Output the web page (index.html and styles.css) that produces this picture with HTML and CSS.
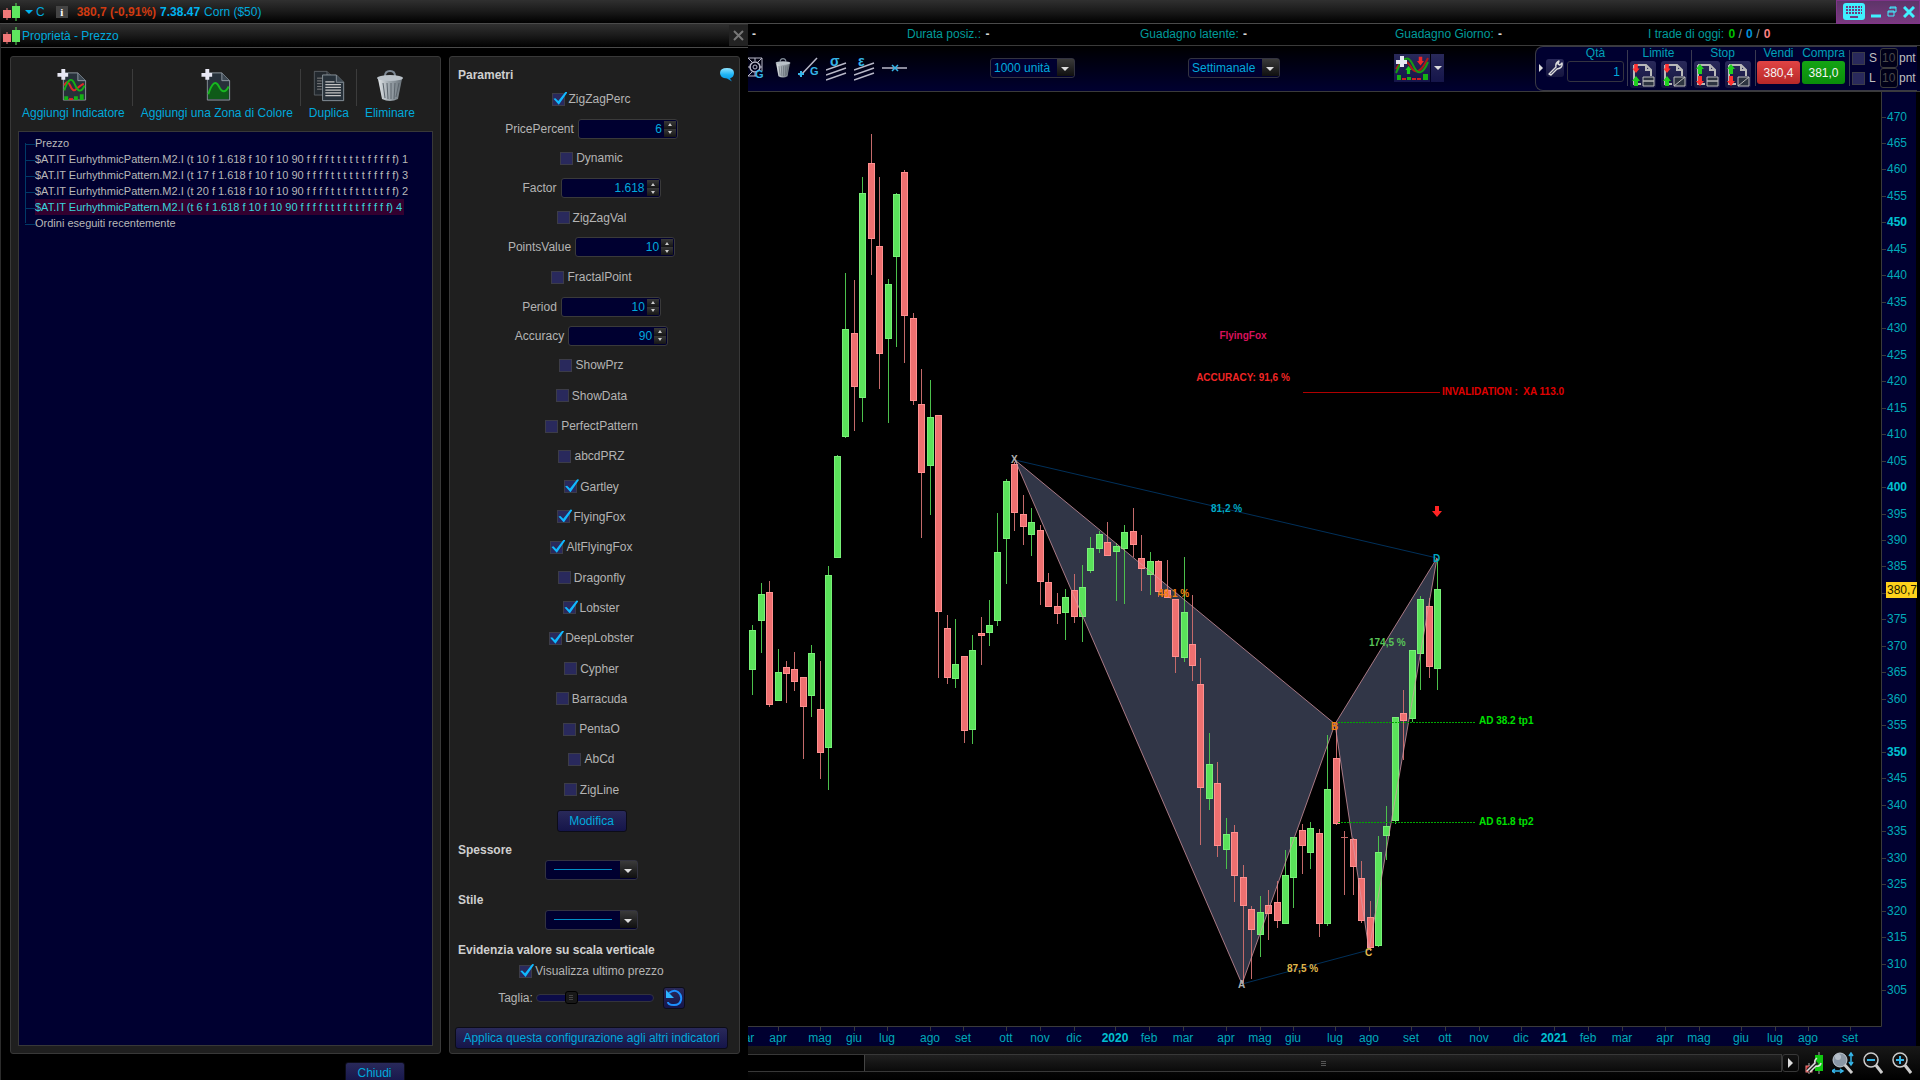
FILE: index.html
```html
<!DOCTYPE html>
<html lang="it">
<head>
    <meta charset="UTF-8">
    <meta name="viewport" content="width=device-width, initial-scale=1.0">
    <title>Corn ($50)</title>
    <link rel="stylesheet" href="styles.css">
</head>
<body>
    <!-- shared icon shapes -->
    <svg class="defs" width="0" height="0" aria-hidden="true">
        <defs>
            <linearGradient id="steel" x1="0" x2="1" y1="0" y2="0">
                <stop offset="0" stop-color="#dfe3e6"/>
                <stop offset="0.5" stop-color="#9aa3aa"/>
                <stop offset="1" stop-color="#6b747b"/>
            </linearGradient>
            <linearGradient id="bubble" x1="0" x2="0" y1="0" y2="1">
                <stop offset="0" stop-color="#8fe3ff"/>
                <stop offset="0.5" stop-color="#1cb4f5"/>
                <stop offset="1" stop-color="#0690dd"/>
            </linearGradient>
            <symbol id="candles" viewBox="0 0 17 18">
                <path d="M4 5v12" stroke="#f07878"/>
                <rect x="0" y="7" width="8" height="8" fill="#f07878"/>
                <path d="M13 0v18" stroke="#5fe65f"/>
                <rect x="9" y="3" width="8" height="12" fill="#5fe65f"/>
            </symbol>
            <symbol id="trash" viewBox="0 0 28 32">
                <path d="M9 6q0-5 5-5t5 5" fill="none" stroke="#7d8894" stroke-width="2"/>
                <path d="M2 9h24l-4 20q-8 4-16 0z" fill="url(#steel)"/>
                <ellipse cx="14" cy="8" rx="13" ry="3" fill="#b9c1c8"/>
                <path d="M7 13l2 15M11 13l1 16M15 13v16M19 13l-1 16M23 13l-3 14" stroke="#5c656d" stroke-width="1"/>
            </symbol>
            <symbol id="doc" viewBox="0 0 26 30">
                <path d="M1 1h15l8 8v20H1z" fill="#27313a" stroke="#8d979f"/>
                <path d="M16 1v8h8" fill="#3d4852" stroke="#8d979f"/>
            </symbol>
            <symbol id="order" viewBox="0 0 24 24">
                <path d="M3 2h12l5 5v6M3 2v19h7M15 2v5h5" fill="none" stroke="#b9b9b9" stroke-width="2"/>
            </symbol>
            <symbol id="up" viewBox="0 0 8 10"><path d="M4 0l4 5H6v5H2V5H0z"/></symbol>
            <symbol id="down" viewBox="0 0 8 10"><path d="M4 10l4-5H6V0H2v5H0z"/></symbol>
            <symbol id="wrench" viewBox="0 0 16 16">
                <path d="M2 14l7-7q-1-4 3-6l-1 3 2 1 2-2q1 5-5 6l-6 6z" fill="none" stroke="#dcdcdc" stroke-width="1.4" stroke-linejoin="round"/>
            </symbol>
        </defs>
    </svg>

    <header class="titlebar">
        <svg class="candle-icon"><use href="#candles"/></svg>
        <button class="symbol-menu" aria-label="Menu"></button>
        <span class="symbol">C</span>
        <span class="info">i</span>
        <span class="last">380,7 (-0,91%)</span>
        <span class="time">7.38.47</span>
        <span>Corn ($50)</span>
        <div class="window-buttons">
            <button aria-label="Tastiera">
                <svg width="22" height="17" viewBox="0 0 22 17">
                    <rect width="22" height="17" rx="3" fill="#40f0ff"/>
                    <path d="M3 4h16M3 7h16M3 10h16" stroke="#703a80" stroke-width="2" stroke-dasharray="2 1"/>
                    <path d="M7 14h8" stroke="#703a80" stroke-width="2"/>
                </svg>
            </button>
            <button aria-label="Riduci">
                <svg width="10" height="14" viewBox="0 0 10 14"><path d="M0 11h10" stroke="#40f0ff" stroke-width="3"/></svg>
            </button>
            <button aria-label="Ripristina">
                <svg width="10" height="12" viewBox="0 0 10 12"><path d="M3 3V1h6v5H7M3 2h6M1 5h6v5H1zM1 6h6" fill="none" stroke="#40f0ff"/></svg>
            </button>
            <button aria-label="Chiudi finestra">
                <svg width="12" height="12" viewBox="0 0 12 12"><path d="M1 1l10 10M11 1L1 11" stroke="#40f0ff" stroke-width="3"/></svg>
            </button>
        </div>
    </header>

    <main class="workspace">
        <section class="dialog">
            <div class="dialog-title">
                <svg class="candle-icon"><use href="#candles"/></svg>
                <h1>Proprietà - Prezzo</h1>
                <button class="dialog-close" aria-label="Chiudi dialogo">
                    <svg width="11" height="11" viewBox="0 0 11 11"><path d="M1 1l9 9M10 1l-9 9" stroke="#777" stroke-width="2"/></svg>
                </button>
            </div>

            <div class="dialog-body">
                <div class="panel list-panel">
                    <div class="actions">
                        <button>
                            <svg width="32" height="34" viewBox="0 0 32 34">
                                <use href="#doc" x="5" y="3" width="26" height="30"/>
                                <path d="M7 17q3-7 6 0t6 4 8-6" fill="none" stroke="#e02828" stroke-width="2"/>
                                <path d="M7 22q6-18 11-6t10 1" fill="none" stroke="#15b015" stroke-width="2"/>
                                <path d="M7 32v-4h4v4M17 32v-4h4v4M23 32v-6h4v6" fill="#15b015"/>
                                <path d="M12 32v-2h4v2" fill="#e02828"/>
                                <path d="M6 0v11M0 6h11" stroke="#e8e8f4" stroke-width="4"/>
                            </svg>
                            Aggiungi Indicatore
                        </button>
                        <button>
                            <svg width="32" height="34" viewBox="0 0 32 34">
                                <use href="#doc" x="5" y="3" width="26" height="30"/>
                                <path d="M7 26q6-18 11-8t10 0v13H7z" fill="#0f5a18"/>
                                <path d="M7 26q6-18 11-8t10 0" fill="none" stroke="#17b81f" stroke-width="2"/>
                                <path d="M6 0v11M0 6h11" stroke="#e8e8f4" stroke-width="4"/>
                            </svg>
                            Aggiungi una Zona di Colore
                        </button>
                        <button>
                            <svg width="34" height="36" viewBox="0 0 34 36">
                                <use href="#doc" x="0" y="0" width="24" height="31" opacity="0.6"/>
                                <path d="M4 10h6M4 13h5M4 16h5M4 19h5M4 22h5" stroke="#888"/>
                                <use href="#doc" x="9" y="5" width="26" height="31"/>
                                <path d="M13 14h10M13 17h17M13 20h17M13 23h17M13 26h17M13 29h17" stroke="#c4c4c4" stroke-width="1.5"/>
                            </svg>
                            Duplica
                        </button>
                        <button>
                            <svg width="28" height="32"><use href="#trash"/></svg>
                            Eliminare
                        </button>
                    </div>
                    <ul class="tree">
                        <li>Prezzo</li>
                        <li>$AT.IT EurhythmicPattern.M2.I (t 10 f 1.618 f 10 f 10 90 f f f f t t t t t t f f f f f) 1</li>
                        <li>$AT.IT EurhythmicPattern.M2.I (t 17 f 1.618 f 10 f 10 90 f f f f t t t t t t f f f f f) 3</li>
                        <li>$AT.IT EurhythmicPattern.M2.I (t 20 f 1.618 f 10 f 10 90 f f f f t t t f t t t t t f f) 2</li>
                        <li><span class="selected">$AT.IT EurhythmicPattern.M2.I (t 6 f 1.618 f 10 f 10 90 f f f f t t t f t t f f f f f) 4</span></li>
                        <li>Ordini eseguiti recentemente</li>
                    </ul>
                </div>

                <form class="panel params">
                    <div class="params-head">
                        <h2>Parametri</h2>
                        <svg width="14" height="14" viewBox="0 0 14 14"><path d="M7 0q7 0 7 5 0 4-4 5.500l2 3-5-3Q0 10 0 5q0-5 7-5z" fill="url(#bubble)"/></svg>
                    </div>
                    <label class="check"><input type="checkbox" checked>ZigZagPerc</label>
                    <div class="number"><label for="pricePercent">PricePercent</label><span class="spin"><input id="pricePercent" type="text" value="6"><button type="button" aria-label="Aumenta"></button><button type="button" aria-label="Diminuisci"></button></span></div>
                    <label class="check"><input type="checkbox">Dynamic</label>
                    <div class="number"><label for="factor">Factor</label><span class="spin"><input id="factor" type="text" value="1.618"><button type="button" aria-label="Aumenta"></button><button type="button" aria-label="Diminuisci"></button></span></div>
                    <label class="check"><input type="checkbox">ZigZagVal</label>
                    <div class="number"><label for="pointsValue">PointsValue</label><span class="spin"><input id="pointsValue" type="text" value="10"><button type="button" aria-label="Aumenta"></button><button type="button" aria-label="Diminuisci"></button></span></div>
                    <label class="check"><input type="checkbox">FractalPoint</label>
                    <div class="number"><label for="period">Period</label><span class="spin"><input id="period" type="text" value="10"><button type="button" aria-label="Aumenta"></button><button type="button" aria-label="Diminuisci"></button></span></div>
                    <div class="number"><label for="accuracy">Accuracy</label><span class="spin"><input id="accuracy" type="text" value="90"><button type="button" aria-label="Aumenta"></button><button type="button" aria-label="Diminuisci"></button></span></div>
                    <label class="check"><input type="checkbox">ShowPrz</label>
                    <label class="check"><input type="checkbox">ShowData</label>
                    <label class="check"><input type="checkbox">PerfectPattern</label>
                    <label class="check"><input type="checkbox">abcdPRZ</label>
                    <label class="check"><input type="checkbox" checked>Gartley</label>
                    <label class="check"><input type="checkbox" checked>FlyingFox</label>
                    <label class="check"><input type="checkbox" checked>AltFlyingFox</label>
                    <label class="check"><input type="checkbox">Dragonfly</label>
                    <label class="check"><input type="checkbox" checked>Lobster</label>
                    <label class="check"><input type="checkbox" checked>DeepLobster</label>
                    <label class="check"><input type="checkbox">Cypher</label>
                    <label class="check"><input type="checkbox">Barracuda</label>
                    <label class="check"><input type="checkbox">PentaO</label>
                    <label class="check"><input type="checkbox">AbCd</label>
                    <label class="check"><input type="checkbox">ZigLine</label>
                    <button type="button" class="btn modify">Modifica</button>

                    <label class="section-title" for="width">Spessore</label>
                    <span class="select line"><select id="width"><option label=" "></option></select></span>
                    <label class="section-title" for="style">Stile</label>
                    <span class="select line"><select id="style"><option label=" "></option></select></span>

                    <h2 class="section-title">Evidenzia valore su scala verticale</h2>
                    <label class="check last-price"><input type="checkbox" checked>Visualizza ultimo prezzo</label>
                    <div class="size">
                        <label for="size">Taglia:</label>
                        <input id="size" type="range" min="0" max="100" value="27">
                        <button type="button" class="btn reset" aria-label="Ripristina taglia">
                            <svg width="18" height="18" viewBox="0 0 18 18"><path d="M4 4q5-4 9-1t3 8-7 5-6-3" fill="none" stroke="#1e90ff" stroke-width="2"/><path d="M1 1v8h8z" fill="#2cb5ff"/></svg>
                        </button>
                    </div>
                    <button type="button" class="btn apply">Applica questa configurazione agli altri indicatori</button>
                </form>
            </div>

            <div class="dialog-footer"><button class="btn close">Chiudi</button></div>
        </section>

        <section class="chart-window">
            <div class="stats">
                <span><b>-</b></span>
                <span>Durata posiz.: <b>-</b></span>
                <span>Guadagno latente: <b>-</b></span>
                <span>Guadagno Giorno: <b>-</b></span>
                <span>I trade di oggi: <b class="win">0</b> <i>/</i> <b class="even">0</b> <i>/</i> <b class="loss">0</b></span>
            </div>

            <div class="toolbar">
                <div class="tools">
                    <button aria-label="Griglia">
                        <svg width="17" height="26" viewBox="0 0 17 26">
                            <path d="M0 3h14v13M0 21h8M0 3l4 4M14 3l-4 4M0 21l4-4M7 3v3M7 21v-3M14 12h-3M0 12h3" fill="none" stroke="#b8b8c8"/>
                            <circle cx="7" cy="12" r="5" fill="none" stroke="#b8b8c8" stroke-width="1.5"/>
                            <circle cx="7" cy="12" r="2" fill="none" stroke="#b8b8c8"/>
                            <text x="7" y="23" class="tool-letter">G</text>
                        </svg>
                    </button>
                    <button aria-label="Cancella"><svg width="16" height="20" viewBox="0 0 28 32" preserveAspectRatio="none"><use href="#trash"/></svg></button>
                    <button aria-label="Linea">
                        <svg width="21" height="22" viewBox="0 0 21 22"><path d="M2 19L19 1" stroke="#b8b8c8" stroke-width="1.5"/><path d="M0 17h6M3 14v6" stroke="#35b5e8" stroke-width="2"/><text x="12" y="18" class="tool-letter">G</text></svg>
                    </button>
                    <button aria-label="Canale sigma">
                        <svg width="21" height="30" viewBox="0 0 21 30"><path d="M0 19l20-7M0 24l20-7M0 29l20-7" transform="translate(0 -2)" stroke="#b8b8c8" stroke-width="1.5"/><text x="4" y="13" class="tool-greek">σ</text></svg>
                    </button>
                    <button aria-label="Canale epsilon">
                        <svg width="21" height="30" viewBox="0 0 21 30"><path d="M0 19l20-7M0 24l20-7M0 29l20-7" transform="translate(0 -2)" stroke="#b8b8c8" stroke-width="1.5"/><text x="4" y="13" class="tool-greek">ε</text></svg>
                    </button>
                    <button aria-label="Linea orizzontale">
                        <svg width="25" height="10" viewBox="0 0 25 10"><path d="M0 5h25" stroke="#b8b8c8" stroke-width="1.5"/><path d="M10 2l6 6M16 2l-6 6" stroke="#35b5e8" stroke-width="1.5"/></svg>
                    </button>
                </div>
                <div><span class="select units"><select aria-label="Unità"><option>1000 unità</option></select></span></div>
                <div><span class="select period"><select aria-label="Periodo"><option>Settimanale</option></select></span></div>
                <div class="indicator">
                    <button class="add-indicator" aria-label="Aggiungi indicatore al grafico">
                        <svg width="34" height="26" viewBox="0 0 34 26">
                            <path d="M1 14q8-14 15-2t17-9" fill="none" stroke="#b01818" stroke-width="2"/>
                            <path d="M1 18q10-24 17-8t15-3" fill="none" stroke="#159a15" stroke-width="2"/>
                            <path d="M2 25v-5h4v5M12 25v-3h4v3M28 25v-6h5v6" fill="#15b015"/>
                            <path d="M7 25v-2h4v2M17 25v-2h4v2M22 25v-2h4v2" fill="#d01f1f"/>
                            <use href="#down" x="22" y="1" width="7" height="10" fill="#f02828"/>
                            <use href="#up" x="10" y="11" width="7" height="8" fill="#18d018"/>
                            <path d="M7 1v11M1 7h11" stroke="#e8e8f4" stroke-width="4"/>
                        </svg>
                    </button>
                    <button class="indicator-menu" aria-label="Elenco indicatori"></button>
                </div>
                <div class="orders">
                    <button class="collapse" aria-label="Comprimi"></button>
                    <button class="tile" aria-label="Impostazioni ordini"><svg width="16" height="16"><use href="#wrench"/></svg></button>
                    <div class="group">
                        <label for="qty">Qtà</label>
                        <input id="qty" class="qty" type="text" value="1">
                    </div>
                    <div class="group ruled">
                        <span>Limite</span>
                        <div class="pair">
                            <button class="tile" aria-label="Limite 1"><svg width="24" height="24" viewBox="0 0 24 24"><use href="#order"/><use href="#down" x="1" y="1" width="8" height="9" fill="#ff3030"/><use href="#up" x="1" y="13" width="8" height="10" fill="#20d020"/><path d="M12 14h11v4H12zM12 18h11v5H12z" fill="#2c3340" stroke="#b9b9b9"/></svg></button>
                            <button class="tile" aria-label="Limite 2"><svg width="24" height="24" viewBox="0 0 24 24"><use href="#order"/><use href="#down" x="1" y="1" width="8" height="9" fill="#ff3030"/><use href="#up" x="1" y="13" width="8" height="10" fill="#20d020"/><path d="M12 14h11v9H12zM12 23l11-9" fill="#2c3340" stroke="#b9b9b9"/></svg></button>
                        </div>
                    </div>
                    <div class="group ruled">
                        <span>Stop</span>
                        <div class="pair">
                            <button class="tile" aria-label="Stop 1"><svg width="24" height="24" viewBox="0 0 24 24"><use href="#order"/><use href="#up" x="1" y="1" width="8" height="10" fill="#20d020"/><use href="#down" x="1" y="13" width="8" height="10" fill="#ff3030"/><path d="M12 14h11v4H12zM12 18h11v5H12z" fill="#2c3340" stroke="#b9b9b9"/></svg></button>
                            <button class="tile" aria-label="Stop 2"><svg width="24" height="24" viewBox="0 0 24 24"><use href="#order"/><use href="#up" x="1" y="1" width="8" height="10" fill="#20d020"/><use href="#down" x="1" y="13" width="8" height="10" fill="#ff3030"/><path d="M12 14h11v9H12zM12 23l11-9" fill="#2c3340" stroke="#b9b9b9"/></svg></button>
                        </div>
                    </div>
                    <div class="group ruled trade">
                        <span>Vendi</span>
                        <button class="sell">380,4</button>
                    </div>
                    <div class="group trade">
                        <span>Compra</span>
                        <button class="buy">381,0</button>
                    </div>
                    <div class="group ruled stops">
                        <div><label><input type="checkbox">S</label><input type="text" value="10" aria-label="Stop punti">pnt</div>
                        <div><label><input type="checkbox">L</label><input type="text" value="10" aria-label="Limite punti">pnt</div>
                    </div>
                </div>
            </div>

            <svg class="chart" viewBox="748 92 1172 954" preserveAspectRatio="none">
                <rect class="axis-bg" x="1882" y="92" width="34" height="954"/>
                <rect class="axis-bg" x="748" y="1027" width="1168" height="19"/>
                <path class="axis-line" d="M748 1026.500H1881.500V92"/>
                <path class="pattern-fill" d="M1015 460L1242 984L1335 724zM1335 724L1369 950L1437 558z"/>
                <path class="link" d="M1015 460L1437 558M1242 984L1369 950"/>
                <g id="candleLayer"></g>
                <path class="pattern-edge" d="M1015 460L1242 984L1335 724zM1335 724L1369 950L1437 558z"/>
                <path class="invalid" d="M1303 392.500H1440"/>
                <path class="target" d="M1338 722.500H1476M1338 822.500H1476"/>
                <path d="M1435 506h4v5h3l-5 6-5-6h3z" fill="#ff2424"/>
                <g class="notes">
                    <text x="1243" y="339" fill="#d8125c" text-anchor="middle">FlyingFox</text>
                    <text x="1243" y="381" fill="#f02626" text-anchor="middle">ACCURACY: 91,6 %</text>
                    <text x="1442" y="395" fill="#e00000" xml:space="preserve">INVALIDATION :  XA 113.0</text>
                    <text x="1211" y="512" fill="#00a9c4">81,2 %</text>
                    <text x="1158" y="597" fill="#f08010">48,1 %</text>
                    <text x="1369" y="646" fill="#58c458">174,5 %</text>
                    <text x="1287" y="972" fill="#e0b84c">87,5 %</text>
                    <text x="1479" y="724" fill="#00e000">AD 38.2 tp1</text>
                    <text x="1479" y="825" fill="#00e000">AD 61.8 tp2</text>
                    <text x="1011" y="463" fill="#b0b0b0">X</text>
                    <text x="1238" y="988" fill="#b0b0b0">A</text>
                    <text x="1331" y="730" fill="#f08010">B</text>
                    <text x="1365" y="956" fill="#e0b84c">C</text>
                    <text x="1433" y="562" fill="#00a9c4">D</text>
                </g>
                <g id="priceAxis" class="axis"></g>
                <g id="timeAxis" class="axis"></g>
                <rect x="1886" y="582" width="31" height="16" fill="#ffd21c"/>
                <text class="price-tag" x="1887" y="594">380,7</text>
            </svg>

            <footer class="bottom-bar">
                <div class="scrollbar"><div class="thumb"></div></div>
                <button class="scroll-right" aria-label="Avanti"></button>
                <button aria-label="Opzioni grafico">
                    <svg width="18" height="22" viewBox="0 0 18 22"><path d="M14 0v22M4 11v11" stroke="#aaa"/><rect x="10" y="3" width="8" height="16" fill="#10c810"/><rect x="1" y="14" width="6" height="6" fill="#c82020" stroke="#e88"/><path d="M3 19l9-9" stroke="#222" stroke-width="5"/><path d="M2 19l8-8q-1-3 2-5M5 20l6-6q4 1 5-3" fill="none" stroke="#e0e0e0" stroke-width="1.5"/></svg>
                </button>
                <button aria-label="Zoom adatta">
                    <svg width="22" height="22" viewBox="0 0 22 22"><path d="M12 12l8 9" stroke="#ccc" stroke-width="3"/><circle cx="8" cy="8" r="7" fill="#8b97a5" stroke="#c5ccd4"/><circle cx="6" cy="5" r="3" fill="#b5bec8"/><path d="M19 2v10M17 4l2-3 2 3M17 10l2 3 2-3M1 19h9M3 17l-3 2 3 2M8 17l3 2-3 2" fill="none" stroke="#35b5e8" stroke-width="1.500"/></svg>
                </button>
                <button aria-label="Zoom indietro">
                    <svg width="20" height="22" viewBox="0 0 20 22"><path d="M12 12l7 9" stroke="#ccc" stroke-width="3"/><circle cx="8" cy="8" r="7" fill="#111" stroke="#ccc" stroke-width="1.500"/><path d="M4 8h8" stroke="#35b5e8" stroke-width="2"/></svg>
                </button>
                <button aria-label="Zoom avanti">
                    <svg width="20" height="22" viewBox="0 0 20 22"><path d="M12 12l7 9" stroke="#ccc" stroke-width="3"/><circle cx="8" cy="8" r="7" fill="#111" stroke="#ccc" stroke-width="1.500"/><path d="M4 8h8M8 4v8" stroke="#35b5e8" stroke-width="2"/></svg>
                </button>
            </footer>
        </section>
    </main>

    <script src="chart.js"></script>
</body>
</html>
```
FILE: styles.css
```css
* {
    box-sizing: border-box;
}
body {
    margin: 0;
    height: 100vh;
    display: flex;
    flex-direction: column;
    overflow: hidden;
    background: #000;
    color: #00a9dc;
    font-family: "Liberation Sans", Arial, sans-serif;
    font-size: 12px;
}
button, input, select {
    font: inherit;
    color: inherit;
    margin: 0;
}
button {
    padding: 0;
    border: 0;
    background: none;
    cursor: pointer;
}
svg {
    display: block;
}
h1, h2 {
    margin: 0;
    font-size: 12px;
    font-weight: normal;
}
.defs {
    position: absolute;
}

/* title bars */
.titlebar, .dialog-title {
    display: flex;
    align-items: center;
    height: 24px;
    padding-left: 3px;
    border-bottom: 1px solid #4a4a4a;
    background: linear-gradient(#303030, #1a1a1a 50%, #000);
}
.titlebar {
    flex: none;
}
.candle-icon {
    width: 17px;
    height: 18px;
    margin-right: 2px;
}
.symbol-menu {
    margin: 0 3px;
    border: 4px solid transparent;
    border-top-color: #00b4f0;
    border-bottom: 0;
}
.info {
    width: 12px;
    margin: 0 9px 0 11px;
    background: #444;
    color: #fff;
    font: bold 11px "Liberation Serif", serif;
    line-height: 12px;
    text-align: center;
}
.last {
    margin-right: 4px;
    color: #d03a10;
    font-weight: bold;
}
.time {
    margin-right: 4px;
    color: #00b4f0;
    font-weight: bold;
}
.window-buttons {
    display: flex;
    align-items: center;
    gap: 6px;
    height: 24px;
    margin-left: auto;
    padding: 0 4px 0 6px;
    border: 1px solid #80338a;
    background: linear-gradient(#5d3468, #7a3a80);
}
.dialog-close {
    margin-left: auto;
    padding: 5px 4px;
    background: #222;
}

.workspace {
    display: flex;
    flex: 1;
    min-height: 0;
}

/* properties dialog */
.dialog {
    display: flex;
    flex-direction: column;
    flex: none;
    width: 748px;
    border-left: 1px solid #2c2c2c;
}
.dialog-title {
    padding-left: 2px;
}
.dialog-body {
    display: flex;
    flex: 1;
    gap: 8px;
    min-height: 0;
    padding: 8px 8px 0 9px;
}
.panel {
    display: flex;
    flex-direction: column;
    border: 1px solid #383838;
    border-radius: 3px;
    background: #1f1f1f;
}
.list-panel {
    flex: 1;
    min-width: 0;
    padding: 12px 7px 7px;
}
.actions {
    display: flex;
    margin-bottom: 11px;
    white-space: nowrap;
}
.actions button {
    display: flex;
    flex-direction: column;
    align-items: center;
    justify-content: flex-end;
    gap: 4px;
    height: 51px;
    padding: 0 8px;
    background: linear-gradient(#3c3c3c, #3c3c3c) right top / 1px 37px no-repeat;
}
.actions button:first-child {
    padding-left: 4px;
}
.actions button:last-child {
    background: none;
}
.tree {
    flex: 1;
    margin: 0;
    padding: 3px 0 0 16px;
    border: 1px solid #383838;
    background: #000030;
    list-style: none;
    font-size: 11px;
    line-height: 16px;
    color: #b8b8b8;
    white-space: nowrap;
}
.tree li {
    display: flex;
    margin-left: -10px;
    background: linear-gradient(#003a68, #003a68) left top / 1px 100% no-repeat;
}
.tree li::before {
    content: "";
    width: 10px;
    height: 9px;
    border-bottom: 1px solid #003a68;
}
.tree li:first-child {
    background-position: left bottom;
    background-size: 1px 8px;
}
.tree li:last-child {
    background-size: 1px 8px;
}
.selected {
    padding-right: 2px;
    background: #33002f;
    color: #38d4dc;
}

.params {
    flex: none;
    width: 291px;
    padding: 8px 11px 4px 5px;
    align-items: center;
    color: #b4b4b4;
}
.params-head {
    display: flex;
    align-items: center;
    justify-content: space-between;
    align-self: stretch;
    height: 20px;
    margin: 0 -6px -1px 0;
}
.params h2, .section-title {
    padding-left: 3px;
    font-weight: bold;
    color: #cfcfcf;
}
.check {
    display: flex;
    flex: 1;
    align-items: center;
    gap: 3px;
}
input[type="checkbox"] {
    appearance: none;
    width: 13px;
    height: 13px;
    border: 1px solid #3c3c48;
    background: #29295c;
}
input[type="checkbox"]:checked::before {
    content: "";
    display: block;
    width: 14px;
    height: 13px;
    margin-top: -2px;
    background: #10b8ff;
    clip-path: polygon(0 55%, 14% 50%, 34% 72%, 86% 0, 100% 4%, 38% 100%);
}
.number {
    display: flex;
    align-items: center;
    gap: 4px;
    height: 29px;
}
.spin {
    display: grid;
    grid-template-columns: 1fr 12px;
    grid-template-rows: 8px 8px;
    width: 100px;
    padding: 1px;
    border: 1px solid #3a3a3a;
    border-radius: 3px;
    background: #000030;
    color: #00a9dc;
}
.spin input {
    grid-row: 1 / 3;
    min-width: 0;
    padding: 0 2px 0 0;
    border: 0;
    background: none;
    text-align: right;
}
.spin button {
    display: grid;
    place-items: center;
    background: linear-gradient(#383838, #161616);
}
.spin button::before {
    content: "";
    border: 2px solid transparent;
    border-bottom: 3px solid #ccc;
    border-top: 0;
}
.spin button:last-child::before {
    border-top: 3px solid #ccc;
    border-bottom: 0;
}
.btn {
    border: 1px solid #0c0c18;
    border-radius: 3px;
    background: linear-gradient(#29295a, #15154a);
    color: #00a9dc;
    height: 22px;
}
.modify {
    width: 70px;
    margin: 5px 0 9px;
}
.section-title {
    align-self: flex-start;
    height: 18px;
    line-height: 18px;
}
.select {
    display: flex;
    position: relative;
    height: 20px;
    border: 1px solid #333340;
    border-radius: 3px;
    background: #000030;
}
.select::after {
    content: "";
    position: absolute;
    right: 5px;
    top: 8px;
    border: 4px solid transparent;
    border-top: 4px solid #ddd;
    border-bottom: 0;
    pointer-events: none;
}
.select select {
    appearance: none;
    flex: 1;
    padding: 0 20px 0 3px;
    border: 0;
    background: linear-gradient(#3a3a3a, #101010) right center / 17px 17px no-repeat;
    color: #00a9dc;
}
.line {
    width: 93px;
    margin: 1px 0 11px;
}
.line select {
    background: linear-gradient(#3a3a3a, #101010) right center / 17px 17px no-repeat, linear-gradient(#0090c8, #0090c8) 8px center / 58px 1px no-repeat;
}
.params .last-price {
    flex: none;
    height: 25px;
}
.size {
    display: flex;
    align-items: center;
    gap: 3px;
    height: 28px;
}
.size input {
    appearance: none;
    width: 118px;
    height: 8px;
    border: 1px solid #33333c;
    border-radius: 4px;
    background: #0c0c48;
}
.size input::-webkit-slider-thumb {
    appearance: none;
    width: 13px;
    height: 13px;
    border: 1px solid #000;
    border-radius: 3px;
    background: repeating-linear-gradient(#444 0 1px, transparent 1px 2px) center / 4px 5px no-repeat #181818;
}
.reset {
    display: grid;
    place-items: center;
    width: 22px;
    margin-left: 6px;
}
.apply {
    align-self: stretch;
    margin-top: 15px;
}
.dialog-footer {
    display: flex;
    justify-content: center;
    height: 26px;
    padding: 8px 0 0;
    overflow: hidden;
}
.close {
    width: 60px;
    flex: none;
}

/* chart window */
.chart-window {
    display: flex;
    flex-direction: column;
    flex: 1;
    min-width: 0;
}
.stats {
    display: grid;
    grid-template-columns: 159fr 233fr 255fr 253fr 272fr;
    align-items: center;
    height: 22px;
    padding-bottom: 2px;
    border-bottom: 1px solid #3a3a3a;
    color: #009b9b;
    white-space: nowrap;
}
.stats span:first-child {
    padding-left: 3px;
}
.stats b {
    margin-left: 1px;
    color: #d8d8d8;
}
.stats i {
    color: #999;
    font-style: normal;
}
.stats .win {
    color: #00c000;
}
.stats .even {
    color: #0090d8;
}
.stats .loss {
    color: #ff8080;
}
.toolbar {
    display: grid;
    grid-template-columns: 242fr 198fr 206fr 141fr 382px 3px;
    align-items: center;
    height: 46px;
    border-bottom: 1px solid #3a3a3a;
    background: linear-gradient(#000, #000030);
}
.toolbar > div {
    padding-bottom: 2px;
}
.tools {
    display: flex;
    align-items: center;
    gap: 7px;
}
.tools button:first-child {
    margin-right: 3px;
}
.tool-letter {
    font-size: 11px;
    font-weight: bold;
    fill: #35b5e8;
}
.tool-greek {
    font-size: 14px;
    font-weight: bold;
    fill: #35b5e8;
}
.units {
    width: 85px;
}
.period {
    width: 92px;
}
.indicator {
    display: flex;
    gap: 1px;
}
.add-indicator, .indicator-menu {
    display: grid;
    place-items: center;
    height: 28px;
    background: linear-gradient(#29295a, #15154a);
}
.add-indicator {
    width: 36px;
}
.indicator-menu {
    width: 13px;
}
.indicator-menu::before {
    content: "";
    border: 4px solid transparent;
    border-top-color: #ddd;
    border-bottom: 0;
}
.orders {
    display: flex;
    align-self: stretch;
    border: 1px solid #3a3a44;
    border-right: 0;
    border-radius: 8px 0 0 8px;
    background: #000030;
    color: #00a0b8;
    overflow: hidden;
}
.collapse {
    width: 9px;
    padding-left: 3px;
}
.collapse::before {
    content: "";
    display: block;
    width: 4px;
    border: 4px solid transparent;
    border-left: 4px solid #ddd;
    border-right: 0;
}
.tile {
    display: grid;
    place-items: center;
    width: 26px;
    height: 27px;
    border-radius: 3px;
    background: linear-gradient(#29295a, #15153f);
}
.orders > .tile {
    align-self: center;
    width: 18px;
    height: 18px;
    margin: 0 3px 0 1px;
}
.group {
    display: flex;
    flex-direction: column;
    align-items: center;
    padding: 0 3px 0 0;
}
.group > label, .group > span {
    height: 14px;
    line-height: 12px;
}
.ruled {
    padding: 0 4px 0 3px;
    background: linear-gradient(#3a3a50, #3a3a50) left center / 1px 36px no-repeat;
}
.qty {
    width: 57px;
    height: 21px;
    padding: 0 3px;
    border: 1px solid #333340;
    border-radius: 3px;
    background: #000030;
    color: #00a9dc;
    text-align: right;
}
.pair {
    display: flex;
    gap: 5px;
}
.trade {
    padding: 0 0 0 2px;
}
.trade button {
    width: 43px;
    height: 23px;
    border-radius: 3px;
    color: #f4f4f4;
}
.sell {
    background: linear-gradient(#e04444, #b82828);
}
.buy {
    background: linear-gradient(#14a414, #0a8c0a);
}
.stops {
    justify-content: space-between;
    margin-left: 4px;
    padding: 1px 0 0 3px;
    color: #c0c0c0;
}
.stops div {
    display: flex;
    align-items: center;
}
.stops label {
    display: flex;
    align-items: center;
    gap: 4px;
    width: 28px;
}
.stops input[type="text"] {
    width: 18px;
    height: 20px;
    margin-right: 1px;
    padding: 0 1px;
    border: 1px solid #3c3c3c;
    border-radius: 3px;
    background: #000018;
    color: #4a4a4a;
}

.chart {
    flex: 1;
    width: 100%;
    min-height: 0;
}
.axis-bg {
    fill: #000030;
}
.axis-line, .tick {
    fill: none;
    stroke: #3a3a3a;
}
.axis text {
    fill: #00a9b8;
}
.axis .major {
    font-weight: bold;
    fill: #00c0d0;
}
.up {
    fill: #5ae25a;
    stroke: #78f078;
}
.down {
    fill: #ee7070;
    stroke: #ff9090;
}
.wick-up {
    stroke: #4cc04c;
}
.wick-down {
    stroke: #c46a6a;
}
.pattern-fill {
    fill: #313647;
}
.pattern-edge {
    fill: none;
    stroke: #d898a4;
    stroke-opacity: 0.75;
}
.link {
    fill: none;
    stroke: #00305a;
}
.invalid {
    stroke: #b00000;
}
.target {
    stroke: #00a800;
    stroke-dasharray: 2 1;
}
.notes {
    font-size: 10px;
    font-weight: bold;
}
.price-tag {
    fill: #201800;
}

.bottom-bar {
    display: flex;
    align-items: center;
    gap: 9px;
    height: 34px;
    padding-right: 8px;
    background: linear-gradient(#181818, #000);
}
.scrollbar {
    flex: 1;
    height: 18px;
    padding-left: 10%;
    border: 1px solid #383838;
    border-left: 0;
    background: #000;
}
.thumb {
    height: 100%;
    border-left: 1px solid #444;
    background: repeating-linear-gradient(#555 0 1px, transparent 1px 2px) center / 5px 5px no-repeat, linear-gradient(#202020, #0a0a0a);
}
.scroll-right {
    display: grid;
    place-items: center;
    width: 17px;
    height: 18px;
    margin: 0 -3px 0 -9px;
    border: 1px solid #383838;
    border-radius: 3px;
}
.scroll-right::before {
    content: "";
    border: 5px solid transparent;
    border-left-color: #ddd;
    border-right: 0;
}
```
FILE: chart.js
```javascript
// [direction, high, body top, body bottom, low] in chart units
const candles = [
    ["u", 625, 630, 670, 695], ["u", 583, 594, 621, 653], ["d", 581, 592, 705, 707], ["u", 649, 672, 701, 701],
    ["d", 661, 667, 674, 703], ["d", 652, 669, 682, 691], ["d", 677, 677, 707, 759], ["u", 645, 653, 696, 717],
    ["d", 661, 709, 753, 779], ["u", 566, 575, 748, 790], ["u", 455, 456, 558, 558], ["u", 273, 329, 437, 438],
    ["d", 280, 333, 387, 431], ["u", 177, 193, 398, 422], ["d", 134, 163, 239, 275], ["d", 177, 246, 354, 389],
    ["u", 279, 284, 339, 423], ["u", 193, 194, 257, 347], ["d", 170, 172, 316, 363], ["d", 313, 318, 401, 405],
    ["d", 369, 404, 473, 538], ["u", 380, 417, 466, 515], ["d", 415, 415, 612, 678], ["d", 615, 628, 678, 684],
    ["u", 619, 664, 679, 688], ["d", 656, 656, 731, 743], ["u", 635, 650, 730, 744], ["d", 617, 633, 636, 665],
    ["u", 600, 625, 633, 646], ["u", 513, 552, 621, 626], ["u", 479, 481, 539, 584], ["d", 462, 464, 513, 531],
    ["d", 495, 514, 527, 545], ["u", 508, 522, 535, 556], ["d", 525, 530, 582, 605], ["d", 573, 582, 607, 607],
    ["d", 593, 606, 614, 624], ["u", 589, 597, 613, 640], ["d", 574, 590, 617, 623], ["u", 565, 587, 617, 642],
    ["u", 537, 548, 571, 573], ["u", 531, 534, 549, 553], ["d", 522, 542, 556, 556], ["u", 543, 546, 552, 601],
    ["u", 525, 532, 549, 604], ["d", 508, 531, 545, 557], ["d", 535, 558, 569, 591], ["u", 552, 561, 575, 595],
    ["d", 560, 561, 592, 597], ["d", 560, 590, 598, 598], ["d", 599, 599, 657, 673], ["u", 557, 612, 658, 662],
    ["d", 595, 644, 666, 681], ["d", 658, 684, 788, 845], ["u", 733, 764, 799, 810], ["d", 762, 783, 846, 857],
    ["u", 818, 834, 850, 869], ["d", 825, 832, 876, 902], ["d", 865, 877, 906, 983], ["d", 906, 909, 930, 979],
    ["u", 896, 912, 935, 957], ["d", 890, 905, 914, 940], ["d", 881, 902, 921, 928], ["u", 850, 875, 924, 924],
    ["u", 837, 837, 878, 908], ["d", 824, 830, 846, 874], ["u", 822, 828, 853, 869], ["d", 829, 833, 924, 937],
    ["u", 735, 789, 924, 926], ["d", 727, 758, 824, 825], ["d", 831, 837, 838, 895], ["d", 838, 839, 867, 895],
    ["d", 861, 878, 921, 923], ["d", 901, 917, 948, 951], ["u", 836, 852, 946, 947], ["u", 806, 826, 836, 860],
    ["u", 717, 717, 821, 824], ["d", 690, 713, 721, 760], ["u", 650, 650, 719, 722], ["u", 596, 599, 654, 690],
    ["d", 598, 606, 667, 678], ["u", 559, 589, 669, 690]
];

const months = [
    ["mar", 744], ["apr", 778], ["mag", 820], ["giu", 854], ["lug", 887], ["ago", 930], ["set", 963], ["ott", 1006],
    ["nov", 1040], ["dic", 1074], ["2020", 1115], ["feb", 1149], ["mar", 1183], ["apr", 1226], ["mag", 1260],
    ["giu", 1293], ["lug", 1335], ["ago", 1369], ["set", 1411], ["ott", 1445], ["nov", 1479], ["dic", 1521],
    ["2021", 1554], ["feb", 1588], ["mar", 1622], ["apr", 1665], ["mag", 1699], ["giu", 1741], ["lug", 1775],
    ["ago", 1808], ["set", 1850]
];

document.getElementById("candleLayer").innerHTML = candles.map(([dir, high, top, bottom, low], i) => {
    const x = Math.floor(752.7 + i * 8.457) + 0.5;
    const name = dir === "u" ? "up" : "down";
    const body = bottom - top < 2
        ? `<path class="wick-${name}" d="M${x - 3.5} ${top + 0.5}h7"/>`
        : `<rect class="${name}" x="${x - 3}" y="${top + 0.5}" width="6" height="${bottom - top - 1}"/>`;
    return `<path class="wick-${name}" d="M${x} ${high}V${low}"/>${body}`;
}).join("");

let prices = "";
for (let price = 470; price >= 305; price -= 5) {
    const y = Math.round(116.5 + (470 - price) * 5.294);
    prices += `<path class="tick" d="M1882 ${y + 0.5}h4"/>`;
    // 380 sits under the last price tag
    if (price !== 380) {
        prices += `<text x="1887" y="${y + 4}"${price % 50 ? "" : ' class="major"'}>${price}</text>`;
    }
}
document.getElementById("priceAxis").innerHTML = prices;

document.getElementById("timeAxis").innerHTML = months.map(([label, x]) =>
    `<path class="tick" d="M${x + 0.5} 1027v4"/><text x="${x}" y="1042" text-anchor="middle"${label.startsWith("20") ? ' class="major"' : ""}>${label}</text>`
).join("");
```
